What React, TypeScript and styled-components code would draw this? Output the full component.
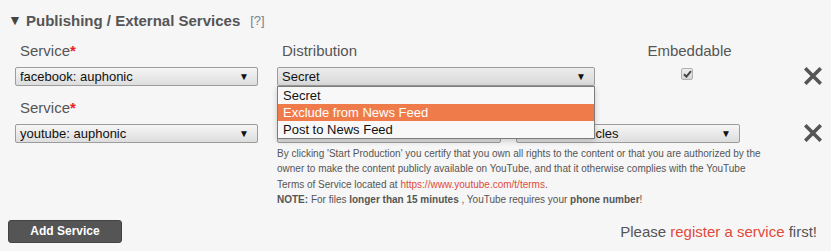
import React from "react";
import styled, { createGlobalStyle } from "styled-components";

const GlobalStyle = createGlobalStyle`
  body {
    margin: 0;
    background: #f6f6f6;
    font-family: "Liberation Sans", Arial, sans-serif;
    color: #555;
  }
`;

const Panel = styled.div`
  width: 831px;
  height: 251px;
  box-sizing: border-box;
  padding: 10px 9px 0 8px;
  overflow: hidden;
`;

const Header = styled.div`
  display: flex;
  align-items: center;
  height: 20px;
  font-size: 15px;
  font-weight: bold;
  color: #555;
`;

const Caret = styled.span`
  font-size: 14px;
  width: 18px;
  color: #444;
`;

const Help = styled.span`
  margin-left: 10px;
  font-size: 13px;
  font-weight: normal;
  color: #7a8290;
`;

const ServiceRow = styled.div<{ $top: number }>`
  display: flex;
  align-items: flex-start;
  padding-left: 7px;
  margin-top: ${(p) => p.$top}px;
`;

const Field = styled.div<{ $width: number; $gap?: number; $center?: boolean }>`
  position: relative;
  display: flex;
  flex-direction: column;
  align-items: ${(p) => (p.$center ? "center" : "stretch")};
  width: ${(p) => p.$width}px;
  margin-left: ${(p) => p.$gap ?? 0}px;
  flex-shrink: 0;
`;

const Label = styled.div`
  height: 18px;
  line-height: 18px;
  font-size: 15px;
  padding-left: 5px;
  margin-bottom: 7px;
  color: #555;
  white-space: nowrap;
`;

const Required = styled.span`
  color: #e8202a;
  font-weight: bold;
`;

const SelectBox = styled.div<{ $open?: boolean }>`
  position: relative;
  height: 19px;
  box-sizing: border-box;
  border: 1px solid #9c9c9c;
  border-radius: 2px;
  background: ${(p) =>
    p.$open
      ? "linear-gradient(#ececec, #d9d9d9)"
      : "linear-gradient(#f6f6f6, #dddddd)"};
  font-size: 13px;
  line-height: 17px;
  color: #111;
  padding-left: 4px;
  white-space: nowrap;
  overflow: hidden;
`;

const Arrow = styled.span`
  position: absolute;
  right: 8px;
  top: 0;
  font-size: 10px;
  color: #111;
`;

const Menu = styled.ul`
  position: absolute;
  left: 0;
  top: 44px;
  width: 318px;
  box-sizing: border-box;
  margin: 0;
  padding: 0;
  list-style: none;
  background: #f8f8f8;
  border: 1px solid #7c7c7c;
  box-shadow: 0 2px 6px rgba(0, 0, 0, 0.18);
  z-index: 5;
`;

const MenuItem = styled.li<{ $active?: boolean }>`
  height: 17px;
  line-height: 17px;
  padding-left: 5px;
  font-size: 13px;
  color: ${(p) => (p.$active ? "#fff" : "#111")};
  background: ${(p) => (p.$active ? "#f07b4a" : "transparent")};
`;

const Check = styled.span`
  display: inline-flex;
  align-items: center;
  justify-content: center;
  width: 12px;
  height: 12px;
  margin-top: 1px;
  box-sizing: border-box;
  border: 1px solid #b0b0b0;
  border-radius: 2px;
  background: linear-gradient(#eeeeee, #d6d6d6);
`;

const Remove = styled.button<{ $top: number }>`
  margin-left: auto;
  margin-top: ${(p) => p.$top}px;
  padding: 0;
  border: 0;
  background: none;
  width: 18px;
  height: 18px;
  cursor: pointer;
`;

const Pair = styled.div`
  display: flex;
  gap: 15px;
`;

const Note = styled.div`
  margin-top: 3px;
  width: 490px;
  font-size: 10px;
  line-height: 15.4px;
  color: #555;

  a {
    color: #e04a3c;
    text-decoration: none;
  }
`;

const Footer = styled.div`
  display: flex;
  align-items: center;
  justify-content: space-between;
  margin-top: 12px;
  padding-right: 5px;
`;

const AddButton = styled.button`
  width: 114px;
  height: 23px;
  border: 1px solid #444;
  border-radius: 3px;
  background: #555;
  color: #fff;
  font-family: "Liberation Sans", Arial, sans-serif;
  font-size: 12px;
  font-weight: bold;
  cursor: pointer;
`;

const Hint = styled.div`
  font-size: 15px;
  color: #555;

  a {
    color: #e04a3c;
    text-decoration: none;
  }
`;

const XIcon = () => (
  <svg width="18" height="18" viewBox="0 0 18 18">
    <path d="M2.5 2.5 L15.5 15.5 M15.5 2.5 L2.5 15.5" stroke="#555" strokeWidth="3.6" strokeLinecap="square" />
  </svg>
);

const Select = ({ value, open }: { value: string; open?: boolean }) => (
  <SelectBox $open={open}>
    {value}
    <Arrow>▼</Arrow>
  </SelectBox>
);

export default function App() {
  return (
    <>
      <GlobalStyle />
      <Panel>
        <Header>
          <Caret>▼</Caret>
          Publishing / External Services
          <Help>[?]</Help>
        </Header>

        <ServiceRow $top={12}>
          <Field $width={243}>
            <Label>
              Service<Required>*</Required>
            </Label>
            <Select value="facebook: auphonic" />
          </Field>
          <Field $width={318} $gap={19}>
            <Label>Distribution</Label>
            <Select value="Secret" open />
            <Menu>
              <MenuItem>Secret</MenuItem>
              <MenuItem $active>Exclude from News Feed</MenuItem>
              <MenuItem>Post to News Feed</MenuItem>
            </Menu>
          </Field>
          <Field $width={184} $center>
            <Label>Embeddable</Label>
            <Check>
              <svg width="9" height="8" viewBox="0 0 9 8">
                <path d="M1 4.2 L3.4 6.6 L8 1.2" stroke="#444" strokeWidth="2" fill="none" />
              </svg>
            </Check>
          </Field>
          <Remove $top={25}>
            <XIcon />
          </Remove>
        </ServiceRow>

        <ServiceRow $top={13}>
          <Field $width={243}>
            <Label>
              Service<Required>*</Required>
            </Label>
            <Select value="youtube: auphonic" />
          </Field>
          <Field $width={463} $gap={19}>
            <Label />
            <Pair>
              <Field $width={224}>
                <Select value="Public" />
              </Field>
              <Field $width={224}>
                <Select value="Autos & Vehicles" />
              </Field>
            </Pair>
            <Note>
              By clicking 'Start Production' you certify that you own all rights to the content or that you are
              authorized by the owner to make the content publicly available on YouTube, and that it otherwise
              complies with the YouTube Terms of Service located at{" "}
              <a href="#">https://www.youtube.com/t/terms</a>.
              <br />
              <b>NOTE:</b> For files <b>longer than 15 minutes</b> , YouTube requires your <b>phone number</b>!
            </Note>
          </Field>
          <Remove $top={25}>
            <XIcon />
          </Remove>
        </ServiceRow>

        <Footer>
          <AddButton>Add Service</AddButton>
          <Hint>
            Please <a href="#">register a service</a> first!
          </Hint>
        </Footer>
      </Panel>
    </>
  );
}
